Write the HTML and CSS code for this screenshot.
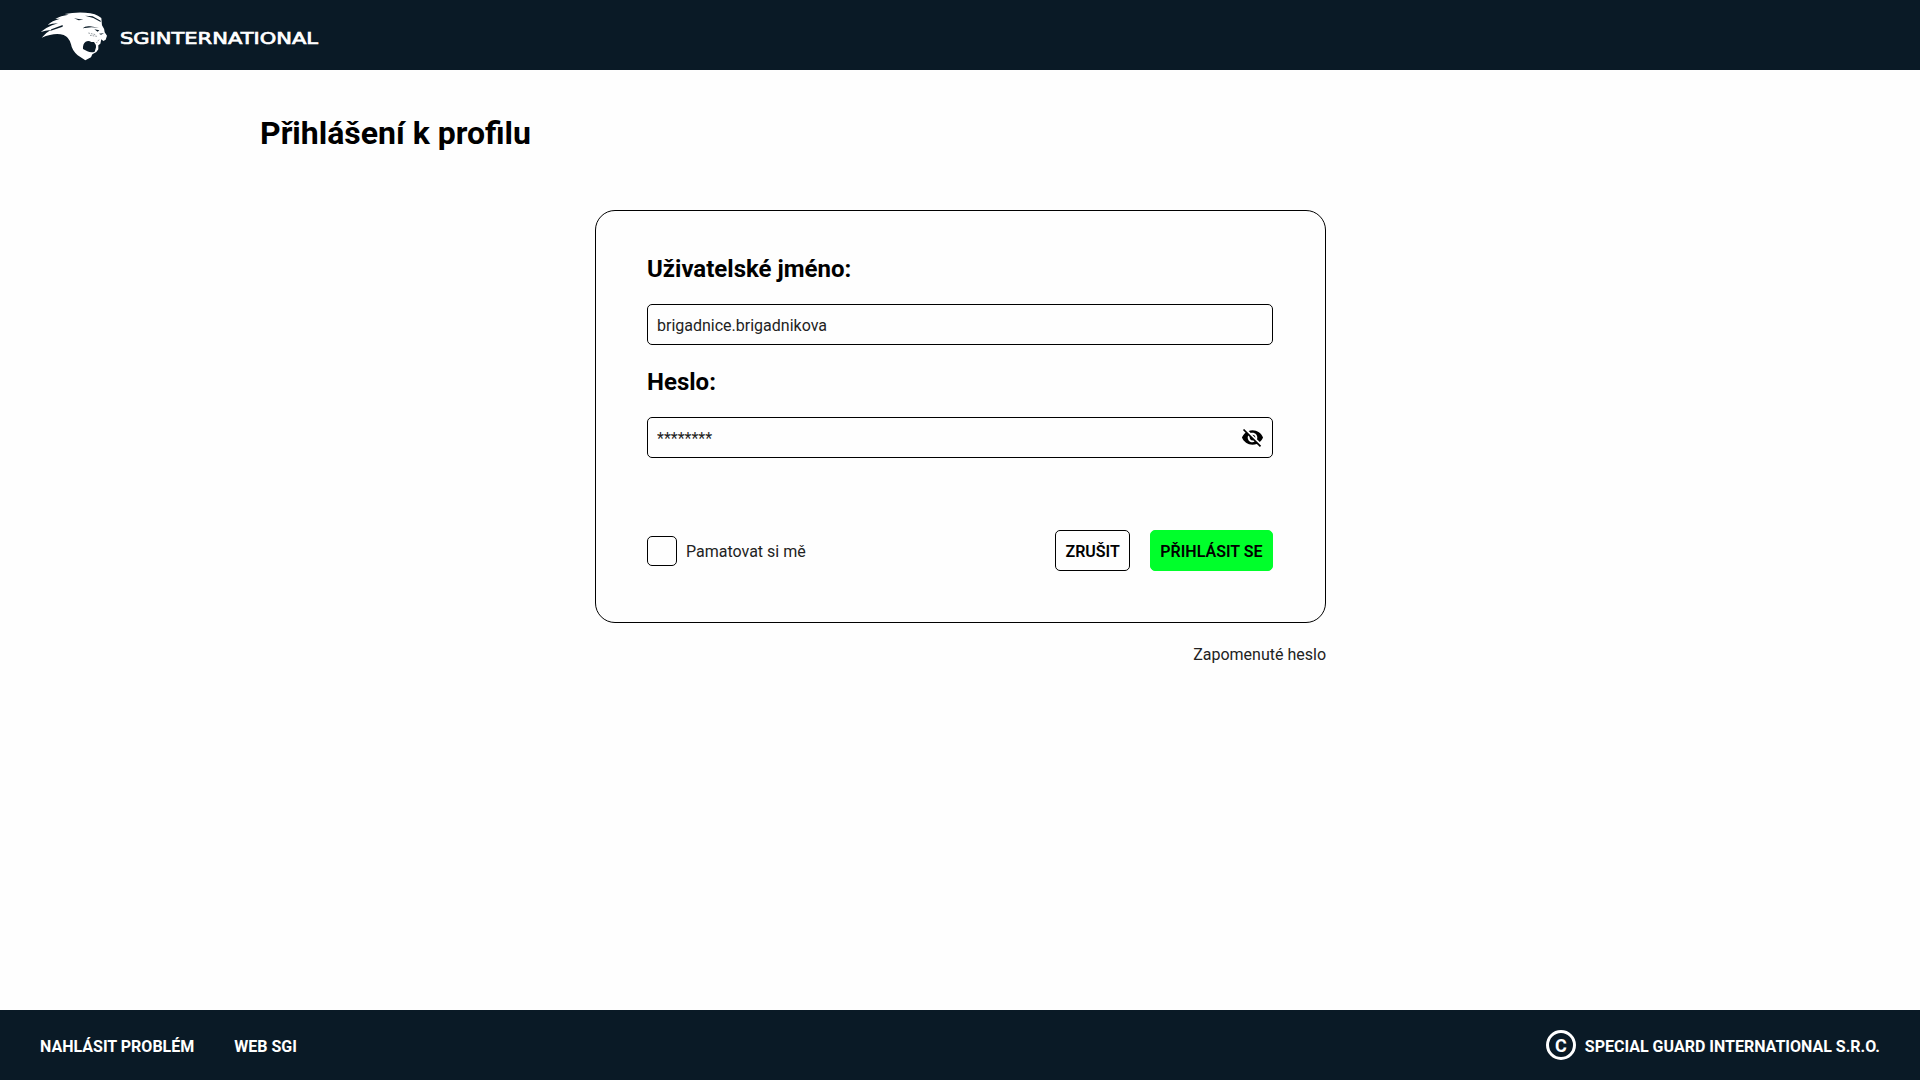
FILE: index.html
```html
<!DOCTYPE html>
<html lang="cs">
<head>
<meta charset="utf-8">
<title>Přihlášení k profilu</title>
<link rel="stylesheet" href="styles.css">
</head>
<body>
<header class="bar header">
  <a class="logo">
    <svg class="logo-lion" viewBox="0 0 240 210" width="80" height="70" aria-hidden="true">
      <path fill="#fff" d="M35 113 Q46 99 62 90 Q46 91 32 96 Q46 84 66 76 L84 70 Q66 70 53 75 Q66 62 90 56 L76 57 Q92 47 116 44 L104 42 Q134 36 166 38 Q198 39 214 54 L216 76 Q223 85 224 97 L231 107 L227 119 L220 123 L214 118 L211 131 L205 136 L205 148 L199 156 L187 163 L183 172 L166 181 L143 166 Q126 151 123 133 Q118 112 101 105 Q74 97 35 113 Z"/>
      <path fill="#0a1a26" d="M167 125 Q176 121 184 126 L192 126 Q199 134 198 142 L194 155 Q184 159 172 154 L159 147 Q158 131 167 125Z"/>
      <path fill="#0a1a26" d="M132 55 L160 59 L146 61Z M165 47 L188 49 L212 62 L212 66 L190 54Z M158 85 Q166 77 180 79 L207 83 L184 82Z M98 75 L64 88 L60 93 L98 80Z M193 88 L208 91 L203 95Z M207 101 L222 100 L213 104Z"/>
      <path fill="none" stroke="#0a1a26" stroke-width="1.3" stroke-dasharray="5 3" d="M175 99 L197 104 M180 106 L201 109 M207 119 L199 129"/>
    </svg>
    <svg class="logo-name" viewBox="0 0 200 20" width="200" height="20">
      <text x="0" y="16" textLength="198" lengthAdjust="spacingAndGlyphs">SGINTERNATIONAL</text>
    </svg>
  </a>
</header>
<main class="content">
  <h1 class="title">Přihlášení k profilu</h1>
  <div class="login">
    <form class="card">
      <label class="label" for="user">Uživatelské jméno:</label>
      <div class="field"><input class="input" id="user" type="text" value="brigadnice.brigadnikova"></div>
      <label class="label" for="pass">Heslo:</label>
      <div class="field">
        <input class="input" id="pass" type="text" value="********">
        <svg class="eye" viewBox="0 0 24 24" width="23" height="23" aria-hidden="true"><path d="M12 7c2.76 0 5 2.24 5 5 0 .65-.13 1.26-.36 1.83l2.92 2.92c1.51-1.26 2.7-2.89 3.43-4.75-1.73-4.39-6-7.5-11-7.5-1.4 0-2.74.25-3.98.7l2.16 2.16C10.74 7.13 11.35 7 12 7zM2 4.27l2.28 2.28.46.46C3.08 8.3 1.78 10.02 1 12c1.73 4.39 6 7.5 11 7.5 1.55 0 3.03-.3 4.38-.84l.42.42L19.73 22 21 20.73 3.27 3 2 4.27zM7.53 9.8l1.55 1.55c-.05.21-.08.43-.08.65 0 1.66 1.34 3 3 3 .22 0 .44-.03.65-.08l1.55 1.55c-.67.33-1.41.53-2.2.53-2.76 0-5-2.24-5-5 0-.79.2-1.53.53-2.2zm4.31-.78l3.15 3.15.02-.16c0-1.66-1.34-3-3-3l-.17.01z"/></svg>
      </div>
      <div class="actions">
        <label class="remember"><input class="checkbox" type="checkbox"><span>Pamatovat si mě</span></label>
        <div class="buttons">
          <button class="button" type="button">ZRUŠIT</button>
          <button class="button primary" type="button">PŘIHLÁSIT SE</button>
        </div>
      </div>
    </form>
    <a class="forgot">Zapomenuté heslo</a>
  </div>
</main>
<footer class="bar footer">
  <nav class="links"><a>NAHLÁSIT PROBLÉM</a><a>WEB SGI</a></nav>
  <div class="copyright"><span class="mark">C</span><span>SPECIAL GUARD INTERNATIONAL S.R.O.</span></div>
</footer>
</body>
</html>
```
FILE: styles.css
```css
* { box-sizing: border-box; }

body {
  margin: 0;
  min-height: 100vh;
  display: flex;
  flex-direction: column;
  background: #fefefe;
  color: #000;
  font: 400 16px/20px Roboto, sans-serif;
}

.bar {
  height: 70px;
  flex: none;
  display: flex;
  align-items: center;
  padding: 0 40px;
  background: #0a1a26;
  color: #fff;
}

.header { padding-left: 30px; }
.logo { display: flex; align-items: center; gap: 10px; }
.logo-lion, .logo-name { display: block; }
.logo-name { margin-top: 5px; }
.logo-name text {
  font: 400 16.5px "DejaVu Sans", sans-serif;
  fill: #fff;
  stroke: #fff;
  stroke-width: 0.7px;
}

.content { flex: 1; padding: 43px 260px 0; }

.title { margin: 0; font-size: 32px; line-height: 40px; font-weight: 700; height: 40px; }

.login {
  width: 731px;
  margin: 57px auto 0;
  display: flex;
  flex-direction: column;
  position: relative;
  left: 0.5px;
}

.card {
  height: 413px;
  padding: 43px 51px 0;
  border: 1px solid #000;
  border-radius: 20px;
  display: flex;
  flex-direction: column;
}

.label { font-size: 24px; line-height: 31px; font-weight: 700; margin-bottom: 19px; }

.field {
  height: 41px;
  width: 626px;
  margin-bottom: 22px;
  padding: 0 8px 0 9px;
  border: 1px solid #000;
  border-radius: 5px;
  display: flex;
  align-items: center;
}

.input {
  flex: 1;
  height: 22px;
  padding: 2px 0 0;
  border: 0;
  outline: 0;
  background: none;
  color: #222;
  font: inherit;
}

.eye { flex: none; margin-bottom: 1px; }

.actions {
  width: 626px;
  margin-top: 50px;
  display: flex;
  align-items: center;
  justify-content: space-between;
}

.remember { display: flex; align-items: center; gap: 9px; color: #222; }
.remember span { padding-top: 2px; }

.checkbox {
  appearance: none;
  width: 30px;
  height: 30px;
  margin: 0;
  border: 1px solid #000;
  border-radius: 5px;
}

.buttons { display: flex; gap: 20px; }

.button {
  height: 41px;
  padding: 2px 9px 0;
  border: 1px solid #000;
  border-radius: 5px;
  background: none;
  color: #000;
  font: 600 16px/20px Roboto, sans-serif;
}

.primary { background: #00ff2b; border-color: #00ff2b; padding-left: 9.5px; padding-right: 9.5px; }

.forgot { align-self: flex-end; margin-top: 22px; color: #222; }

.footer { justify-content: space-between; font-weight: 700; }
.links { display: flex; gap: 40px; padding-top: 3px; }
.copyright { display: flex; align-items: center; gap: 9px; line-height: 24px; }
.copyright span:last-child { padding-top: 3px; }

.mark {
  width: 30px;
  height: 30px;
  border: 3px solid #fff;
  border-radius: 50%;
  text-align: center;
  font-size: 18px;
  line-height: 25px;
}
```
